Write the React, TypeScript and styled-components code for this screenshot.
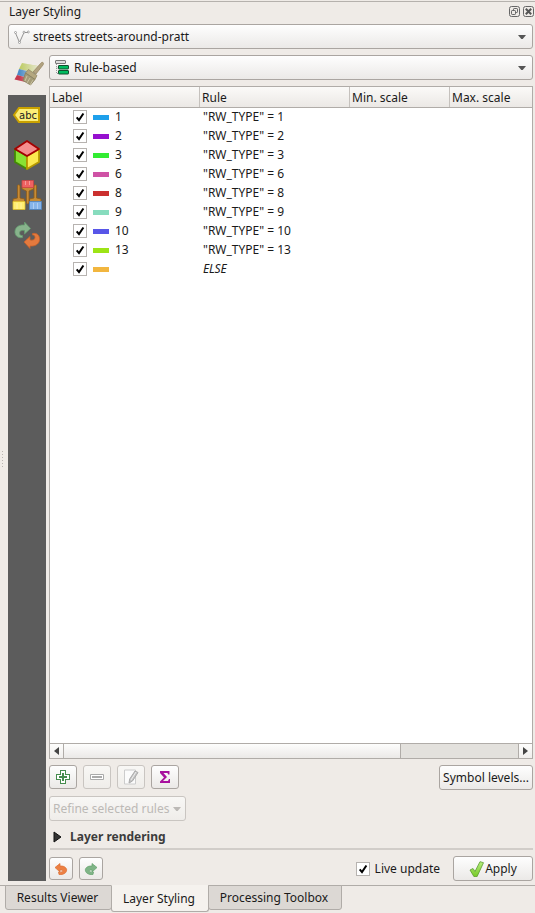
import React from "react";
import styled, { createGlobalStyle, css } from "styled-components";

const GlobalStyle = createGlobalStyle`
  *, *::before, *::after { box-sizing: border-box; }
  body { margin: 0; background: #efebe7; overflow: hidden; }
`;

const Window = styled.div`
  width: 535px;
  height: 913px;
  display: flex;
  flex-direction: column;
  background: #efebe7;
  color: #1a1a1a;
  font: 12px/18px "Noto Sans", sans-serif;
  white-space: nowrap;
  overflow: hidden;
  svg { display: block; flex: none; }
`;

const TitleBar = styled.header`
  height: 24px;
  flex: none;
  display: flex;
  align-items: flex-start;
  justify-content: space-between;
  padding: 3px 1px 0 9px;
  background: linear-gradient(#efebe7 1px, #b5b1ad 1px, #b5b1ad 2px, #efebe7 2px);
`;

const TitleButtons = styled.div`
  display: flex;
  gap: 3px;
  padding-top: 3px;
`;

const face = css`
  border: 1px solid #aaa5a1;
  border-radius: 3px;
  background: linear-gradient(#fefefe, #ebe9e7);
`;

const Combo = styled.div`
  ${face}
  height: 25px;
  flex: none;
  display: flex;
  align-items: center;
  padding: 0 6px 0 5px;
  > span { flex: 1; padding-left: 3px; }
`;

const LayerCombo = styled(Combo)`
  margin: 0 2px 0 8px;
`;

const Main = styled.main`
  height: 832px;
  flex: none;
  display: flex;
  padding: 0 2px 0 8px;
`;

const Sidebar = styled.nav`
  width: 38px;
  flex: none;
`;

const ActiveTool = styled.div`
  height: 46px;
  padding: 12px 0 0 5px;
`;

const ToolStrip = styled.div`
  height: 786px;
  background: #5c5c5c;
  display: flex;
  flex-direction: column;
  align-items: center;
`;

const ToolSlot = styled.div`
  height: 40px;
  display: flex;
  align-items: center;
`;

const Content = styled.section`
  flex: 1;
  min-width: 0;
  margin-left: 3px;
  padding-top: 6px;
  display: flex;
  flex-direction: column;
`;

const Table = styled.div`
  height: 673px;
  flex: none;
  margin-top: 6px;
  border: 1px solid #b0aca8;
  background: #fff;
  display: flex;
  flex-direction: column;
`;

const columns = css`
  display: grid;
  grid-template-columns: 150px 150px 100px 1fr;
`;

const HeaderRow = styled.div`
  ${columns}
  height: 21px;
  flex: none;
  border-bottom: 1px solid #b0aca8;
  background: linear-gradient(#fbfaf8, #ebe8e5);
`;

const HeaderCell = styled.div`
  padding: 2px 2px 0;
  border-right: 1px solid #c5c1bd;
  line-height: 18px;
  &:last-child { border-right: 0; }
`;

const Rows = styled.div`
  flex: 1;
`;

const Row = styled.div`
  ${columns}
  height: 19px;
`;

const LabelCell = styled.div`
  height: 18px;
  display: flex;
  align-items: center;
  padding-left: 23px;
`;

const Swatch = styled.i<{ $color: string }>`
  width: 16px;
  height: 5px;
  margin: 1px 6px 0;
  background: ${(p) => p.$color};
`;

const RuleCell = styled.div<{ $italic?: boolean }>`
  padding-left: 3px;
  font-style: ${(p) => (p.$italic ? "italic" : "normal")};
  letter-spacing: ${(p) => (p.$italic ? "-0.15px" : "0")};
`;

const CheckFrame = styled.span`
  width: 14px;
  height: 14px;
  flex: none;
  border: 1px solid #b7b3b0;
  background: #fff;
`;

const ScrollBar = styled.div`
  height: 15px;
  flex: none;
  display: flex;
  border-top: 1px solid #b0aca8;
  background: #e3e1dd;
`;

const ScrollArrow = styled.div<{ $end?: boolean }>`
  width: 14px;
  display: flex;
  align-items: center;
  justify-content: center;
  background: linear-gradient(#fdfdfc, #f0eeec);
  border: 0 solid #b0aca8;
  border-width: ${(p) => (p.$end ? "0 0 0 1px" : "0 1px 0 0")};
`;

const ScrollThumb = styled.div`
  width: 337px;
  margin-right: auto;
  border-right: 1px solid #b0aca8;
  background: linear-gradient(#fdfdfc, #ebe9e7);
`;

const ButtonRow = styled.div`
  display: flex;
  height: 25px;
  margin-top: 6px;
  gap: 6px;
`;

const Button = styled.button<{ $w: number; $h: number; $off?: boolean }>`
  ${face}
  width: ${(p) => p.$w}px;
  height: ${(p) => p.$h}px;
  padding: 0;
  display: flex;
  align-items: center;
  justify-content: center;
  font: inherit;
  color: ${(p) => (p.$off ? "#bcb9b6" : "#1a1a1a")};
  border-color: ${(p) => (p.$off ? "#c9c5c1" : "#aaa5a1")};
  background: ${(p) => (p.$off ? "linear-gradient(#f8f7f5, #efedea)" : "linear-gradient(#fefefe, #ebe9e7)")};
`;

const RefineButton = styled(Button)`
  justify-content: space-between;
  padding: 0 4px 0 3px;
`;

const Spacer = styled.div`
  flex: 1;
`;

const RenderingGroup = styled.div`
  height: 29px;
  padding: 0 0 0 3px;
  display: flex;
  align-items: center;
  gap: 8px;
  border-bottom: 2px solid #d1cdc9;
  font-weight: 700;
  color: #3c3c3c;
  margin-left: 1px;
  > span { padding-top: 5px; }
  > svg { margin-top: 4px; }
`;

const Footer = styled.div`
  display: flex;
  align-items: center;
  height: 25px;
  margin-top: 6px;
  gap: 6px;
`;

const LiveLabel = styled.label`
  margin: 0 7px 0 -1px;
`;

const Tabs = styled.footer`
  height: 32px;
  display: flex;
  align-items: flex-start;
  padding: 4px 0 0 5px;
  background: linear-gradient(#efebe7 4px, #b0aca8 4px, #b0aca8 5px, #efebe7 5px);
`;

const Tab = styled.div<{ $w: number; $active?: boolean }>`
  width: ${(p) => p.$w}px;
  height: ${(p) => (p.$active ? 27 : 25)}px;
  padding-top: ${(p) => (p.$active ? 4 : 3)}px;
  padding-right: 2px;
  text-align: center;
  border: 1px solid #b0aca8;
  border-top-color: ${(p) => (p.$active ? "#f5f2ee" : "#b0aca8")};
  border-radius: 0 0 3px 3px;
  background: ${(p) => (p.$active ? "#f5f2ee" : "#dcd8d4")};
  & + & { margin-left: -1px; }
`;

const SplitGrip = styled.div`
  position: absolute;
  left: 2px;
  top: 451px;
  width: 1px;
  height: 16px;
  background: repeating-linear-gradient(#b9b5b1 0 1px, #efebe7 1px 3px);
`;

const Check = () => (
  <CheckFrame>
    <svg width="12" height="12" viewBox="0 0 12 12">
      <path d="M2.7 6.3 5 9.1 9.4 2.5" fill="none" stroke="#000" strokeWidth="2" />
    </svg>
  </CheckFrame>
);

const Chevron = ({ color = "#555" }: { color?: string }) => (
  <svg width="8" height="4" viewBox="0 0 8 4">
    <path d="M0 0h8L4.7 4H3.3z" fill={color} />
  </svg>
);

const FloatIcon = () => (
  <svg width="11" height="11" viewBox="0 0 11 11" fill="none" stroke="#666">
    <rect x=".5" y=".5" width="10" height="10" rx="2" />
    <rect x="4.5" y="2.5" width="4" height="4" rx=".7" />
    <rect x="2.5" y="4.5" width="4" height="4" rx=".7" fill="#efebe7" />
  </svg>
);

const CloseIcon = () => (
  <svg width="11" height="11" viewBox="0 0 11 11" fill="none" stroke="#666">
    <rect x=".5" y=".5" width="10" height="10" rx="2" />
    <path d="m2.8 2.8 5.4 5.4m0-5.4L2.8 8.2" strokeWidth="2" stroke="#555" />
  </svg>
);

const LineLayerIcon = () => (
  <svg width="16" height="16" viewBox="0 0 16 16" fill="none" stroke="#888" strokeWidth=".9">
    <path d="m1.5 4 4 9.5L10 3.5h4" />
    <g fill="#fff" strokeWidth=".7">
      <circle cx="1.5" cy="3.5" r="1" />
      <circle cx="5.5" cy="13.5" r="1" />
      <circle cx="10" cy="3.2" r="1" />
      <circle cx="14.3" cy="3" r="1" />
    </g>
  </svg>
);

const RuleIcon = () => (
  <svg width="16" height="16" viewBox="0 0 16 16">
    <path d="M1.5 4v9.5H4M1.500 8H4" fill="none" stroke="#999" strokeDasharray="1 1" />
    <rect x=".5" y=".5" width="10" height="3" rx=".5" fill="#ddd" stroke="#777" />
    <rect x="3.5" y="5.5" width="10" height="3.500" rx=".4" fill="#00bd60" stroke="#12502e" />
    <rect x="3.5" y="10.5" width="10" height="3.500" rx=".4" fill="#00bd60" stroke="#12502e" />
  </svg>
);

const BrushIcon = () => (
  <svg width="32" height="28" viewBox="0 0 32 28">
    <defs>
      <linearGradient id="fade" x2="1">
        <stop offset=".2" stopColor="#efebe7" stopOpacity="0" />
        <stop offset="1" stopColor="#efebe7" stopOpacity=".8" />
      </linearGradient>
    </defs>
    <path d="m9 2 16 3-3 7-16-4z" fill="#bccb62" />
    <path d="m6 8 16 4-3 6L4 14z" fill="#4b8bc8" />
    <path d="m4 14 15 4-2 4L1.500 18.500z" fill="#c4384e" />
    <path d="m9 2 16 3-8 17L1.500 18.500z" fill="url(#fade)" />
    <path d="m20 11 7.500-8.500c2-2.500 4-.5 2.500 1.500L23 13z" fill="#b1a280" stroke="#94825c" strokeWidth=".7" />
    <path d="m15.500 8.500 8.500 6-2 4-9.500-6.500z" fill="#b4a77f" stroke="#8d815e" strokeWidth=".7" />
    <path d="m12.500 12 9.500 6.500-4.500 5.500-7.500-4.500z" fill="#a59c78" stroke="#877d5c" strokeWidth=".8" />
    <path d="m14 15-2 5m5-3-3 5m6-3-3 5" stroke="#d2caab" strokeWidth=".8" />
  </svg>
);

const LabelIcon = () => (
  <svg width="30" height="20" viewBox="0 0 30 20">
    <path d="M7 3h20v14H7L2 10z" fill="#fcee78" stroke="#c9a100" strokeWidth="2" />
    <text x="7" y="14" fontFamily="DejaVu Sans" fontSize="10" textLength="18" fill="#222">abc</text>
  </svg>
);

const CubeIcon = () => (
  <svg width="28" height="30" viewBox="0 0 28 30" strokeWidth="1.8" strokeLinejoin="round">
    <path d="M2 9v13l12 7V16z" fill="#88e233" stroke="#438b05" />
    <path d="M26 9v13l-12 7V16z" fill="#fce94f" stroke="#b69900" />
    <path d="m14 1 12 8-12 7L2 9z" fill="#f58d8d" stroke="#a50000" />
  </svg>
);

const BrushTreeIcon = () => (
  <svg width="30" height="32" viewBox="0 0 30 32">
    <g fill="#c78c36" stroke="#8f5c18" strokeWidth=".8" strokeLinejoin="round">
      <path d="M5.500 6.500q1.200-1.500 2.500 0V19l4.500 1v4H1v-4l4.500-1z" />
      <path d="M22 6.500q1.200-1.500 2.500 0V19l4.500 1v4H17.500v-4l4.500-1z" />
      <path d="M10 7.500h11.500V10L17 12v12q-1.300 2-2.600 0V12L10 10z" />
    </g>
    <path d="M10 1.500h11.500v7H10z" fill="#ef6262" stroke="#c94343" strokeWidth=".8" />
    <path d="M1 22.500h12V30.500H1z" fill="#ffee70" stroke="#dcbd29" strokeWidth=".8" />
    <path d="M17.500 22.500h12V30.500h-12z" fill="#86b4ea" stroke="#4d83c1" strokeWidth=".8" />
    <path d="M13.500 2v4m4-4v4M5 24v6m4-6v6M21.500 24v6m4-6v6" stroke="#fff" opacity=".35" />
  </svg>
);

const HistoryIcon = () => (
  <svg width="28" height="28" viewBox="0 0 28 28" strokeLinejoin="round" strokeWidth=".8">
    <path d="M9.500 16.500C4.500 17.500 1.500 14 2 10 2.500 5.500 7 3.500 11.500 4V1l6 6.500-6 5.500v-3.500C8.500 9 6.500 10 6.500 12c0 2 1.200 2.600 3 2.600z" fill="#88b38c" stroke="#649c70" />
    <path d="M19.500 12.500c5-1 7.500 2.500 7 6.500-.5 4.500-5 6.500-9.500 6v2.500l-6-6.500 6-5.500V19c3 .5 5-.5 5-2.500s-1.200-2.500-2.500-2.500z" fill="#e47a3e" stroke="#c86129" />
  </svg>
);

const PlusIcon = () => (
  <svg width="14" height="14" viewBox="0 0 14 14" shapeRendering="crispEdges">
    <path d="M4.500.5h5v4h4v5h-4v4h-5v-4h-4v-5h4z" fill="#fff" stroke="#468c4e" />
    <path d="M7 3v8M3 7h8" stroke="#468c4e" strokeWidth="2" />
  </svg>
);

const MinusIcon = () => (
  <svg width="14" height="6" viewBox="0 0 14 6">
    <path d="M.5.5h13v5H.5z" fill="#fff" stroke="#aaa" />
    <path d="M2 3h10" stroke="#aaa" strokeWidth="2" />
  </svg>
);

const EditIcon = () => (
  <svg width="16" height="16" viewBox="0 0 16 16">
    <path d="M1.500 1h11v14h-11z" fill="#fbfbfb" stroke="#ccc" />
    <path d="m6 14 .7-4L12 2l3 1.500L9.500 12z" fill="#c4c4c4" stroke="#aaa" />
    <path d="m8 11 5-8" stroke="#eee" />
  </svg>
);

const SigmaIcon = () => (
  <svg width="12" height="14" viewBox="0 0 12 14">
    <path d="M1 1h9.500v3.500H9L8.500 3H4.500L8 7l-4 4h5l1-2h1v4H1v-1.500L5 7.500 1 3z" fill="#a8109e" />
  </svg>
);

const TurnIcon = ({ redo = false }: { redo?: boolean }) => (
  <svg width="14" height="14" viewBox="0 0 14 14">
    <g transform={redo ? "translate(14 0) scale(-1 1)" : undefined}>
      <path d="M1 5.500 6 1.500V4c8-.5 9 7 2 8.500H5l-.5-2.500c4 1 6-2.200 1.500-2v2z" fill={redo ? "#7fb487" : "#ec8044"} stroke={redo ? "#62a26c" : "#dc6d30"} strokeWidth=".7" strokeLinejoin="round" />
    </g>
  </svg>
);

const ApplyIcon = () => (
  <svg width="16" height="16" viewBox="0 0 16 16">
    <defs>
      <linearGradient id="leaf" x2="0" y2="1">
        <stop stopColor="#b7ee7f" />
        <stop offset="1" stopColor="#76ca25" />
      </linearGradient>
    </defs>
    <path d="m1 9 3-1.500 2 3L11 .7l3.500 1-6.500 14H5z" fill="url(#leaf)" stroke="#5c9b31" strokeWidth=".8" strokeLinejoin="round" />
  </svg>
);

const rules = [
  ["1", "#1ea0eb"],
  ["2", "#9610cf"],
  ["3", "#32ec32"],
  ["6", "#cf52a5"],
  ["8", "#cb302f"],
  ["9", "#87dcbe"],
  ["10", "#5856e8"],
  ["13", "#9de416"],
  ["", "#f2b63f"],
];

export default function App() {
  return (
    <Window>
      <GlobalStyle />
      <SplitGrip />
      <TitleBar>
        <span>Layer Styling</span>
        <TitleButtons><FloatIcon /><CloseIcon /></TitleButtons>
      </TitleBar>
      <LayerCombo>
        <LineLayerIcon /><span>streets streets-around-pratt</span><Chevron />
      </LayerCombo>
      <Main>
        <Sidebar>
          <ActiveTool><BrushIcon /></ActiveTool>
          <ToolStrip>
            <ToolSlot><LabelIcon /></ToolSlot>
            <ToolSlot><CubeIcon /></ToolSlot>
            <ToolSlot><BrushTreeIcon /></ToolSlot>
            <ToolSlot><HistoryIcon /></ToolSlot>
          </ToolStrip>
        </Sidebar>
        <Content>
          <Combo><RuleIcon /><span>Rule-based</span><Chevron /></Combo>
          <Table>
            <HeaderRow>
              {["Label", "Rule", "Min. scale", "Max. scale"].map((h) => <HeaderCell key={h}>{h}</HeaderCell>)}
            </HeaderRow>
            <Rows>
              {rules.map(([label, color]) => (
                <Row key={color}>
                  <LabelCell><Check /><Swatch $color={color} />{label}</LabelCell>
                  <RuleCell $italic={!label}>{label ? `"RW_TYPE" = ${label}` : "ELSE"}</RuleCell>
                </Row>
              ))}
            </Rows>
            <ScrollBar>
              <ScrollArrow><svg width="5" height="8"><path d="M5 0v8L0 4z" fill="#444" /></svg></ScrollArrow>
              <ScrollThumb />
              <ScrollArrow $end><svg width="5" height="8"><path d="M0 0v8l5-4z" fill="#444" /></svg></ScrollArrow>
            </ScrollBar>
          </Table>
          <ButtonRow>
            <Button $w={28} $h={24}><PlusIcon /></Button>
            <Button $w={28} $h={24} $off><MinusIcon /></Button>
            <Button $w={28} $h={24} $off><EditIcon /></Button>
            <Button $w={28} $h={24}><SigmaIcon /></Button>
            <Spacer />
            <Button $w={94} $h={25}>Symbol levels...</Button>
          </ButtonRow>
          <ButtonRow>
            <RefineButton $w={137} $h={25} $off><span>Refine selected rules</span><Chevron color="#bcb9b6" /></RefineButton>
          </ButtonRow>
          <RenderingGroup>
            <svg width="9" height="12"><path d="M1 1v10l7-5z" fill="#333" stroke="#111" /></svg>
            <span>Layer rendering</span>
          </RenderingGroup>
          <Footer>
            <Button $w={24} $h={23}><TurnIcon /></Button>
            <Button $w={24} $h={23}><TurnIcon redo /></Button>
            <Spacer />
            <Check />
            <LiveLabel>Live update</LiveLabel>
            <Button $w={80} $h={25}><ApplyIcon />Apply</Button>
          </Footer>
        </Content>
      </Main>
      <Tabs>
        <Tab $w={107}>Results Viewer</Tab>
        <Tab $w={98} $active>Layer Styling</Tab>
        <Tab $w={134}>Processing Toolbox</Tab>
      </Tabs>
    </Window>
  );
}
